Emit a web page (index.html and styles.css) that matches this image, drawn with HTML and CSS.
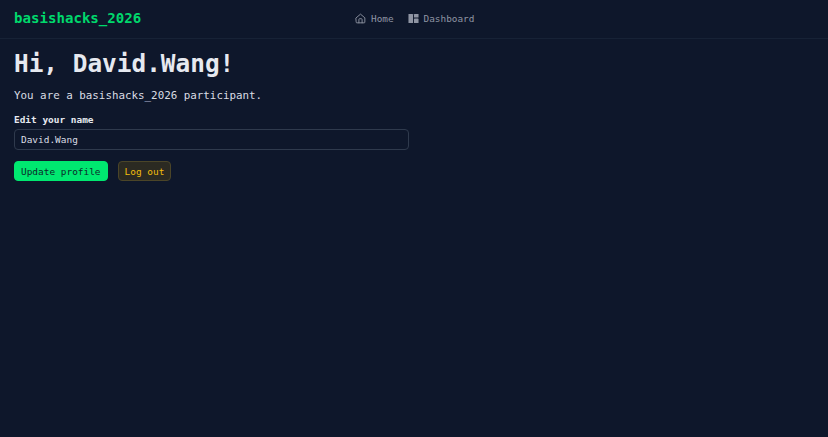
FILE: index.html
```html
<!DOCTYPE html>
<html lang="en">
<head>
    <meta charset="UTF-8">
    <meta name="viewport" content="width=device-width, initial-scale=1.0">
    <title>basishacks_2026</title>
    <link rel="stylesheet" href="styles.css">
</head>
<body>
    <header class="topbar">
        <a class="brand" href="#">basishacks_2026</a>
        <nav class="nav">
            <a class="nav-link" href="#">
                <svg class="nav-icon" viewBox="0 0 24 24" fill="none" stroke="currentColor" stroke-width="2" stroke-linecap="round" stroke-linejoin="round">
                    <path d="M2.5 10.5 12 2.5l9.5 8V20a1.5 1.5 0 0 1-1.5 1.5H4A1.500 1.5 0 0 1 2.500 20z"/>
                    <path d="M8.500 21.500V14a1.500 1.500 0 0 1 1.500-1.500h4a1.500 1.500 0 0 1 1.500 1.500v7.500"/>
                </svg>
                Home
            </a>
            <a class="nav-link" href="#">
                <svg class="nav-icon" viewBox="0 0 24 24" fill="currentColor">
                    <path d="M1 3a1 1 0 0 1 1-1h8a1 1 0 0 1 1 1v18a1 1 0 0 1-1 1H2a1 1 0 0 1-1-1z"/>
                    <path d="M13 3a1 1 0 0 1 1-1h8a1 1 0 0 1 1 1v6a1 1 0 0 1-1 1h-8a1 1 0 0 1-1-1z"/>
                    <path d="M13 13a1 1 0 0 1 1-1h8a1 1 0 0 1 1 1v8a1 1 0 0 1-1 1h-8a1 1 0 0 1-1-1z"/>
                </svg>
                Dashboard
            </a>
        </nav>
    </header>

    <main class="content">
        <h1>Hi, David.Wang!</h1>
        <p class="intro">You are a basishacks_2026 participant.</p>
        <form class="profile">
            <label class="field-label" for="name">Edit your name</label>
            <input class="field" id="name" type="text" value="David.Wang">
            <div class="actions">
                <button class="btn btn-primary" type="button">Update profile</button>
                <button class="btn btn-logout" type="button">Log out</button>
            </div>
        </form>
    </main>
</body>
</html>
```

FILE: styles.css
```css
html, body {
    height: 100%;
}
body {
    margin: 0;
    background-color: #0e172b;
    color: #e6e9f0;
    font-family: "DejaVu Sans Mono", "Liberation Mono", monospace;
}
.topbar {
    position: relative;
    display: flex;
    align-items: center;
    box-sizing: border-box;
    height: 39px;
    padding: 0 14px 2px;
    border-bottom: 1px solid #172236;
}
.brand {
    color: #00d86c;
    font-size: 14.1px;
    font-weight: 700;
    text-decoration: none;
}
.nav {
    position: absolute;
    left: 355px;
    top: 0;
    height: 36px;
    display: flex;
    align-items: center;
    gap: 14px;
}
.nav-link {
    display: flex;
    align-items: center;
    gap: 5px;
    color: #8f95a3;
    font-size: 9.4px;
    text-decoration: none;
}
.nav-icon {
    width: 11px;
    height: 11px;
}
.content {
    padding: 0 14px;
}
h1 {
    margin: 10px 0 0;
    font-size: 24.4px;
    line-height: 30px;
    font-weight: 700;
    color: #e6e9f0;
}
.intro {
    margin: 9px 0 0;
    font-size: 10.85px;
    line-height: 16px;
    color: #dadde4;
}
.profile {
    margin-top: 9px;
    width: 395px;
}
.field-label {
    display: block;
    font-size: 9.45px;
    font-weight: 700;
    line-height: 14px;
    color: #e6e9f0;
}
.field {
    display: block;
    box-sizing: border-box;
    width: 100%;
    height: 21px;
    margin-top: 2px;
    padding: 0 6px;
    background-color: #0e172b;
    border: 1px solid #2f3a4d;
    border-radius: 4px;
    color: #dadde4;
    font-family: inherit;
    font-size: 9.45px;
}
.actions {
    display: flex;
    gap: 10px;
    margin-top: 11px;
}
.btn {
    height: 20px;
    padding: 0 6px;
    border-radius: 4px;
    font-family: inherit;
    font-size: 9.45px;
    cursor: pointer;
}
.btn-primary {
    background-color: #00e870;
    border: 1px solid #00e870;
    color: #0c2a2b;
}
.btn-logout {
    background-color: #2b2a22;
    border: 1px solid #4b4528;
    color: #f0bc0c;
}
```
